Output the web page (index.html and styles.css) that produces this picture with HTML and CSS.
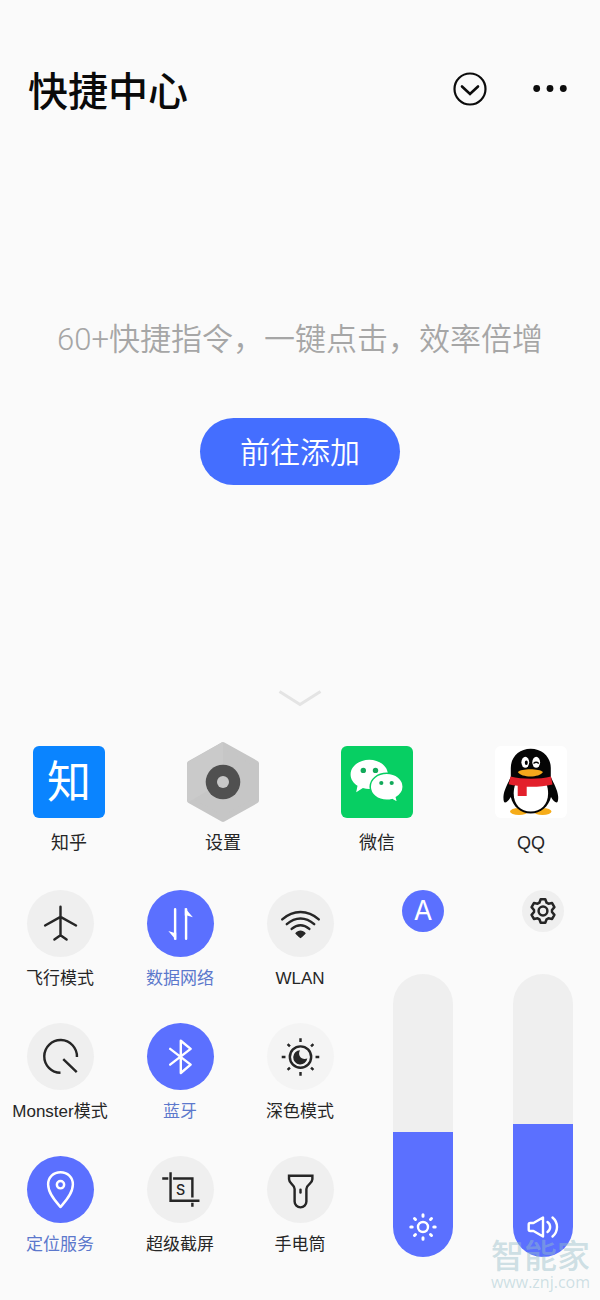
FILE: index.html
```html
<!DOCTYPE html>
<html lang="zh-CN">
<head>
<meta charset="utf-8">
<meta name="viewport" content="width=device-width, initial-scale=1">
<title>快捷中心</title>
<link rel="stylesheet" href="styles.css">
</head>
<body>
<header class="header">
  <h1 class="title">快捷中心</h1>
  <div class="header-actions">
    <button class="icon-button" type="button" aria-label="收起">
      <svg width="44" height="44" viewBox="0 0 44 44" fill="none" stroke="#0c0c0c" stroke-width="2.2" stroke-linecap="round" stroke-linejoin="round"><circle cx="22" cy="22" r="15.5"/><path stroke-width="2.6" stroke-linejoin="miter" d="M14 19.500l8 7.500 8-7.500"/></svg>
    </button>
    <button class="icon-button" type="button" aria-label="更多">
      <svg width="44" height="44" viewBox="0 0 44 44" fill="#0c0c0c"><circle cx="8.700" cy="21.500" r="3.400"/><circle cx="22" cy="21.500" r="3.400"/><circle cx="35.300" cy="21.500" r="3.400"/></svg>
    </button>
  </div>
</header>

<main class="main">
  <section class="shortcuts">
    <p class="hint">60+快捷指令，一键点击，效率倍增</p>
    <button class="add-button" type="button">前往添加</button>
  </section>

  <div class="handle">
    <svg width="44" height="20" viewBox="0 0 44 20" fill="none" stroke="#e4e4e4" stroke-width="3"><path d="M1.500 3.500L22 16.500 42.500 3.500"/></svg>
  </div>

  <nav class="apps">
    <a class="app" href="#zhihu">
      <span class="app-slot"><span class="zhihu" aria-hidden="true">知</span></span>
      <span class="app-name">知乎</span>
    </a>
    <a class="app" href="#settings">
      <span class="app-slot">
        <svg width="74" height="82" viewBox="0 0 74 82"><path d="M37 4l33 18.500v37L37 78 4 59.500v-37z" fill="#c6c6c6" stroke="#c6c6c6" stroke-width="6" stroke-linejoin="round"/><path d="M37 1v40L2.500 61Q1 60 1 57V24q0-2 2-3.500L34 2.500Q35.500 1 37 1z" fill="#cacaca"/><circle cx="37" cy="41" r="17.300" fill="#505050"/><circle cx="37" cy="41" r="6" fill="#c8c8c8"/></svg>
      </span>
      <span class="app-name">设置</span>
    </a>
    <a class="app" href="#wechat">
      <span class="app-slot">
        <svg width="72" height="72" viewBox="0 0 72 72"><rect width="72" height="72" rx="6" fill="#07cf63"/><path fill="#fff" d="M28.300 13.800c-10.300 0-18.700 6.500-18.700 14.600 0 4.600 2.600 8.600 6.900 11.300l-1.300 6.600 6.700-4.300c2 .6 4.200.9 6.400.9 10.300 0 18.600-6.500 18.600-14.500S38.600 13.800 28.300 13.800z"/><path fill="#fff" stroke="#07cf63" stroke-width="1.500" d="M45.700 27.300c-9.200 0-16.500 6-16.500 13.500s7.300 13.500 16.500 13.500c1.900 0 3.700-.2 5.400-.7l5.600 3-1.300-5.300c4.200-2.400 6.800-6.200 6.800-10.500 0-7.500-7.300-13.500-16.500-13.500z"/><g fill="#12a95a"><circle cx="22.300" cy="24.400" r="2.700"/><circle cx="34.500" cy="24.400" r="2.700"/><circle cx="40.300" cy="37" r="2.100"/><circle cx="50.700" cy="37" r="2.100"/></g></svg>
      </span>
      <span class="app-name">微信</span>
    </a>
    <a class="app" href="#qq">
      <span class="app-slot">
        <svg width="72" height="72" viewBox="0 0 72 72"><rect width="72" height="72" rx="6" fill="#fff"/><g fill="#f6ac19"><ellipse cx="24" cy="65.500" rx="9" ry="3.500"/><ellipse cx="47.500" cy="65.500" rx="9" ry="3.500"/></g><path fill="#050505" d="M35.700 2.700C24 2.700 15.800 11 15.800 22v9C13 37 9 44 8.500 50c-.3 4.500.6 6.500 1.500 6.500 1.800 0 4-2.500 5.800-5.500C18 60.500 25.500 67.500 35.700 67.500S53.600 60.500 56 51c1.700 3 4 5.500 5.600 5.500 1 0 1.900-2 1.500-6.500-.5-6-4.500-13-7.300-19v-9c0-11-8.400-19.300-20.100-19.300z"/><path fill="#fff" d="M20.500 38h30.800c1.300 3 1.800 6 1.800 9.500 0 11-7.400 18-17.400 18s-17-7-17-18c0-3.500.5-6.500 1.800-9.500z"/><path fill="#e3202b" d="M15.500 30.500c12 3 29 3 40.500 0l1.500 8c-8 2-17 2.500-25.800 2.200V50h-9V39.800c-3.300-.3-6.200-.8-9-1.500z"/><g fill="#fff"><ellipse cx="30.300" cy="16.300" rx="3.900" ry="5.500"/><ellipse cx="41.200" cy="16.300" rx="3.900" ry="5.500"/></g><ellipse cx="31.300" cy="16.800" rx="1.500" ry="2.300"/><path d="M38.500 17.500q2.700-2.500 5.300 0" fill="none" stroke="#050505" stroke-width="1.300"/><path fill="#f6a81c" d="M22.800 26c3.500-3.800 21.500-3.800 25.200 0-3.700 6-21.500 6-25.200 0z"/></svg>
      </span>
      <span class="app-name">QQ</span>
    </a>
  </nav>

  <section class="controls">
    <div class="tiles">
      <button class="tile" type="button" aria-pressed="false">
        <svg class="tile-icon" viewBox="0 0 66 66"><path d="M33 16.500V45M17.800 35L33 26.500 48.300 35M27 48.800l6-4.300 6 4.300"/></svg>
        <span>飞行模式</span>
      </button>
      <button class="tile tile-on" type="button" aria-pressed="true">
        <svg class="tile-icon" viewBox="0 0 66 66"><path d="M27.700 19v29M38.500 48V19"/><path class="solid" d="M21 40.500l5.500 1.500h2.300v7.500zM45.200 26.800L39.500 25h-2.300v-7.500z"/></svg>
        <span>数据网络</span>
      </button>
      <button class="tile" type="button" aria-pressed="false">
        <svg class="tile-icon" viewBox="0 0 66 66"><path d="M15 29c11-9.700 25-9.700 36 0M19.500 33.700c8.500-7.500 18.500-7.500 27 0M24.300 38.300c5.500-4.600 11.900-4.600 17.400 0"/><path class="solid" d="M27.800 42.500c3-3.600 7.400-3.600 10.400 0-.5 1-3 3.500-5.200 5-2.200-1.500-4.700-4-5.200-5z"/></svg>
        <span>WLAN</span>
      </button>
      <button class="tile" type="button" aria-pressed="false">
        <svg class="tile-icon" viewBox="0 0 66 66"><path stroke-linecap="butt" d="M49.200 33.500A16.100 16.100 0 1 0 33 49M35.700 35.700L49 48.500"/></svg>
        <span>Monster模式</span>
      </button>
      <button class="tile tile-on" type="button" aria-pressed="true">
        <svg class="tile-icon" viewBox="0 0 66 66"><path d="M22.800 25.500L43 41l-9.700 8.200V17.500L43 25.500 22.800 41"/></svg>
        <span>蓝牙</span>
      </button>
      <button class="tile tile-faint" type="button" aria-pressed="false">
        <svg class="tile-icon" viewBox="0 0 66 66"><circle cx="33" cy="33.500" r="10.500"/><path class="solid" d="M32.500 26.800a7 7 0 1 0 7.200 8.200c-5.500 2-10-3-7.200-8.200z"/><path stroke-linecap="butt" d="M33 15v3.700M33 48.300V52M14.500 33.500h3.700M47.800 33.500h3.700M20.300 20.800l2.300 2.300M43.400 43.900l2.300 2.300M45.700 20.800l-2.300 2.300M22.600 43.900l-2.300 2.300"/></svg>
        <span>深色模式</span>
      </button>
      <button class="tile tile-on" type="button" aria-pressed="true">
        <svg class="tile-icon" viewBox="0 0 66 66"><path d="M33 50.300C28 44.500 20.800 36.500 20.800 28c0-7 5.200-12 12.200-12s12.200 5 12.200 12c0 8.500-7.200 16.500-12.200 22.300z"/><circle cx="33" cy="28.300" r="3.600"/></svg>
        <span>定位服务</span>
      </button>
      <button class="tile" type="button" aria-pressed="false">
        <svg class="tile-icon" viewBox="0 0 66 66"><path stroke-linecap="butt" stroke-linejoin="miter" d="M23.200 16v28h28.500M15 22.200h6M25.700 22.200h19V41M44.700 46v4"/><text class="glyph" x="33" y="38" text-anchor="middle">S</text></svg>
        <span>超级截屏</span>
      </button>
      <button class="tile" type="button" aria-pressed="false">
        <svg class="tile-icon" viewBox="0 0 66 66"><path stroke-linejoin="miter" d="M21.700 19.500h23v3.500c0 4.500-5.900 5-5.900 9.500v12.300a5.800 5.800 0 0 1-11.600 0V32.500c0-4.500-5.500-5-5.500-9.500z"/><path d="M33 33.300v2.700"/></svg>
        <span>手电筒</span>
      </button>
    </div>

    <div class="level">
      <button class="round round-on" type="button" aria-label="自动亮度">A</button>
      <label class="slider">
        <input class="range" type="range" min="0" max="100" value="44" aria-label="亮度" style="--level: 44%">
        <svg class="slider-icon" width="32" height="32" viewBox="0 0 32 32"><circle cx="16" cy="16" r="5"/><path stroke-width="3" d="M16 3.800v1.400M16 26.800v1.400M3.800 16h1.400M26.800 16h1.400M7.500 7.500l1 1M23.500 23.500l1 1M24.500 7.500l-1 1M8.500 23.500l-1 1"/></svg>
      </label>
    </div>

    <div class="level">
      <button class="round" type="button" aria-label="设置">
        <svg width="42" height="42" viewBox="-21 -21 42 42" fill="none" stroke="#262626" stroke-width="2.500" stroke-linejoin="round"><path d="M-2.300-11.800h4.600L3.600-8.300 5.400-7.300l3.700-.6 2.300 4L9-1v2l2.400 2.900-2.300 4-3.700-.6-1.800 1-1.300 3.500h-4.600l-1.300-3.500-1.800-1-3.700.6-2.300-4L-9 1v-2l-2.400-2.900 2.300-4 3.700.6 1.800-1z"/><circle r="4.400"/></svg>
      </button>
      <label class="slider">
        <input class="range" type="range" min="0" max="100" value="47" aria-label="音量" style="--level: 47%">
        <svg class="slider-icon" width="32" height="32" viewBox="0 0 32 32"><path d="M1.700 13.500q0-1.500 1.500-1.500h3.300L16 6.500v19L6.500 20H3.200q-1.500 0-1.500-1.500zM20.500 11c3.500 2.500 3.500 7.500 0 10M25.500 6.500c6 5 6 14 0 19"/></svg>
      </label>
    </div>
  </section>
</main>

<aside class="watermark">
  <span class="watermark-name">智能家</span>
  <span class="watermark-url">www.znj.com</span>
</aside>
</body>
</html>
```

FILE: styles.css
```css
:root {
  --blue: #5b70ff;
  --grey: #efefef;
  --ink: #262626;
}

* {
  box-sizing: border-box;
}

body {
  position: relative;
  display: flex;
  flex-direction: column;
  min-height: 100vh;
  margin: 0;
  background: #fafafa;
  color: var(--ink);
  font-family: "Liberation Sans", "Noto Sans CJK SC", sans-serif;
}

button {
  padding: 0;
  border: 0;
  background: none;
  color: inherit;
  font: inherit;
  cursor: pointer;
}

svg {
  display: block;
}

.header {
  display: flex;
  align-items: center;
  justify-content: space-between;
  padding: 59px 28px 0;
}

.title {
  margin: 0;
  color: #0a0a0a;
  font-family: "Noto Sans CJK SC", sans-serif;
  font-size: 40px;
  font-weight: 500;
  line-height: 60px;
}

.header-actions {
  display: flex;
  gap: 36px;
}

.main {
  display: flex;
  flex: 1;
  flex-direction: column;
  padding-bottom: 43px;
}

.shortcuts {
  display: flex;
  flex: 1;
  flex-direction: column;
  align-items: center;
  justify-content: center;
  gap: 56px;
  padding-bottom: 4px;
}

.hint {
  margin: 0;
  color: #a6a6a6;
  font-family: "Roboto", "Noto Sans CJK SC", sans-serif;
  font-size: 31px;
  font-weight: 350;
  line-height: 44px;
}

.add-button {
  width: 200px;
  height: 67px;
  padding-bottom: 4px;
  border-radius: 34px;
  background: #446eff;
  color: #fff;
  font-family: "Noto Sans CJK SC", sans-serif;
  font-size: 30px;
  font-weight: 350;
  line-height: 44px;
}

.handle {
  display: flex;
  justify-content: center;
  padding-bottom: 33px;
}

.apps {
  display: flex;
  justify-content: space-between;
  padding: 0 32px;
}

.app {
  display: flex;
  flex-direction: column;
  align-items: center;
  gap: 8px;
  width: 74px;
  color: var(--ink);
  text-decoration: none;
}

.app-slot {
  display: flex;
  align-items: center;
  justify-content: center;
  height: 82px;
}

.zhihu {
  width: 72px;
  height: 72px;
  border-radius: 6px;
  background: #0a84ff;
  color: #fff;
  font-family: "Noto Sans CJK SC", sans-serif;
  font-size: 44px;
  line-height: 66px;
  text-align: center;
}

.app-name {
  font-size: 18px;
  line-height: 24px;
}

.controls {
  display: grid;
  grid-template-columns: 3fr 1fr 1fr;
  padding-top: 35px;
}

.tiles {
  display: grid;
  grid-template-columns: repeat(3, 1fr);
  row-gap: 32px;
}

.tile {
  display: flex;
  flex-direction: column;
  align-items: center;
  gap: 10px;
  font-size: 17px;
  line-height: 24px;
  white-space: nowrap;
}

.tile-icon {
  width: 67px;
  height: 67px;
  border-radius: 50%;
  background: var(--grey);
  fill: none;
  stroke: var(--ink);
  stroke-width: 2.4;
  stroke-linecap: round;
  stroke-linejoin: round;
}

.tile-icon .solid {
  fill: var(--ink);
  stroke: none;
}

.tile-icon .glyph {
  fill: var(--ink);
  stroke: none;
  font-family: "Inter", sans-serif;
  font-size: 14px;
  font-weight: 500;
}

.tile-faint .tile-icon {
  background: #f4f4f4;
}

.tile-on {
  color: #5c78cc;
}

.tile-on .tile-icon {
  background: var(--blue);
  stroke: #fff;
}

.tile-on .tile-icon .solid {
  fill: #fff;
}

.level {
  display: flex;
  flex-direction: column;
  align-items: center;
  gap: 42px;
  padding-left: 6px;
}

.round {
  width: 42px;
  height: 42px;
  border-radius: 50%;
  background: var(--grey);
  font-family: "Inter", sans-serif;
  font-size: 27px;
  line-height: 42px;
}

.round-on {
  background: var(--blue);
  color: #fff;
}

.slider {
  position: relative;
  display: flex;
  flex: 1;
  width: 60px;
}

.range {
  align-self: stretch;
  width: 60px;
  height: auto;
  margin: 0;
  border-radius: 30px;
  background: linear-gradient(to top, var(--blue) var(--level), var(--grey) var(--level));
  appearance: none;
  direction: rtl;
  writing-mode: vertical-lr;
}

.range::-webkit-slider-thumb {
  width: 60px;
  height: 4px;
  appearance: none;
  background: transparent;
}

.slider-icon {
  position: absolute;
  bottom: 14px;
  left: 14px;
  fill: none;
  stroke: #fff;
  stroke-width: 2.4;
  stroke-linecap: round;
  stroke-linejoin: round;
  pointer-events: none;
}

.watermark {
  position: absolute;
  right: 10px;
  bottom: 10px;
  display: flex;
  flex-direction: column;
  align-items: center;
  color: rgba(150, 190, 200, 0.45);
  pointer-events: none;
}

.watermark-name {
  font-size: 33px;
  font-weight: 500;
  line-height: 34px;
}

.watermark-url {
  font-family: "Open Sans", sans-serif;
  font-size: 16px;
  line-height: 16px;
}
```
